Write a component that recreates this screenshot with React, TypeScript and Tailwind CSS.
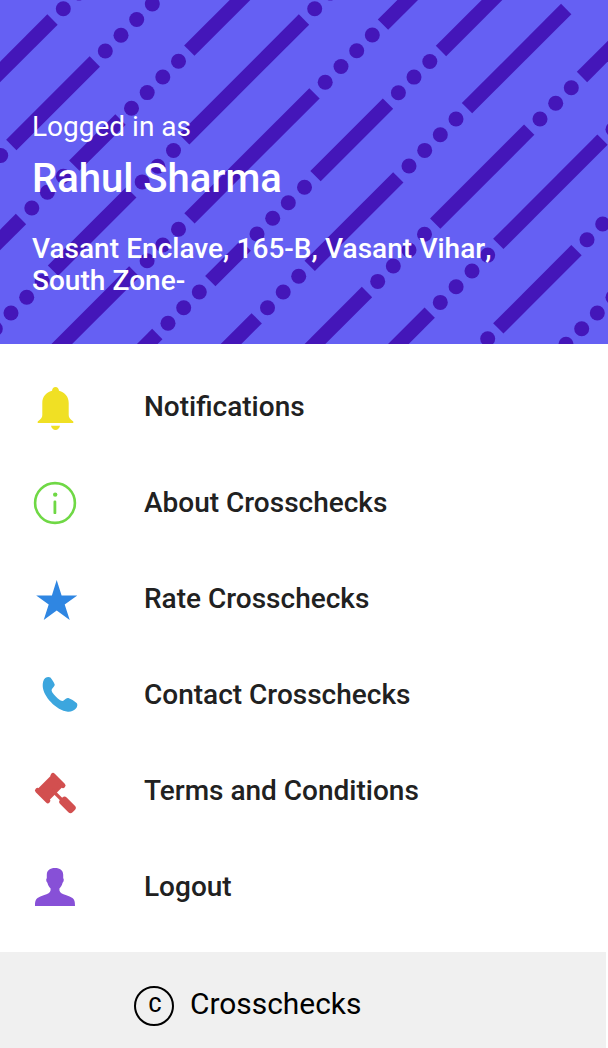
import React from "react";

type Segment = [number, number, number, number];

const bars: Segment[] = [
  [52.5, 19.5, -18, 90],
  [94.8, 61.5, 11.3, 145],
  [260, -20, 189.3, 50.7],
  [120.5, 119.5, 74.3, 165.7],
  [21, 219, -20, 260],
  [304, 19.5, 184.2, 139.3],
  [131.3, 192.3, 53, 270.6],
  [430, -22.3, 383, 24.7],
  [314.5, 93.3, 189.5, 218.3],
  [134.3, 271.5, 45.8, 360],
  [515, -23, 441, 51],
  [388, 103.7, 315.5, 176.2],
  [245.7, 245.7, 210.3, 281.1],
  [157.3, 334, 131.3, 360],
  [566.2, 9, 467, 108.2],
  [398.3, 177.3, 309.7, 265.9],
  [256.7, 318.3, 215, 360],
  [639, 20, 582, 77],
  [529.2, 129.7, 435.2, 223.7],
  [367, 292, 299, 360],
  [602.5, 139.7, 498.3, 243.9],
  [429.7, 312.7, 382.4, 360],
  [576.5, 250.2, 498.3, 328.4],
];

const dots: [number, number][] = [
  [63.3, 8.8], [79, -7],
  [105.3, 51], [121, 35.3], [136.7, 19.5], [152.3, 4], [0.7, 155.5],
  [178.5, 61.3], [162.8, 77], [147.2, 92.6], [131.5, 108.3],
  [63.3, 176.3], [47.4, 192.2], [31.8, 208],
  [314.7, 8.8], [330.3, -7], [173.5, 150.5], [157.8, 166.2], [142.2, 181.9],
  [42.2, 281.5], [26.7, 297.2], [11, 313], [-4.7, 328.7],
  [372.3, 35], [356.7, 50.8], [341, 66.5], [325.2, 82.3],
  [178.5, 229.3], [162.8, 245], [147.1, 260.7],
  [429.8, 61.5], [414, 77.1], [398.4, 92.7],
  [304.5, 187.3], [288.3, 202.7], [272.7, 218.3], [257, 234],
  [199.3, 292], [183.7, 307.7], [168, 323.3],
  [456, 119], [440.3, 134.7], [424.7, 150.4], [409, 166],
  [298.7, 276.3], [283.2, 292], [267.5, 307.7],
  [571.3, 87.7], [555.7, 103.3], [540, 119],
  [424.5, 234.3], [409, 250], [393.3, 266], [377.7, 281.4],
  [613, 129.3], [487.7, 255.1], [472, 271], [456.1, 286.7], [440.3, 302.4],
  [587, 239.7], [602.7, 224], [487.7, 338.7],
  [613, 297.3], [597.3, 313], [581.7, 328.7], [566, 344.3],
];

function Pattern() {
  return (
    <svg className="absolute inset-0 h-full w-full" viewBox="0 0 608 344" aria-hidden="true">
      <g stroke="#4416b9" strokeWidth="14.6">
        {bars.map(([x1, y1, x2, y2]) => (
          <line key={`${x1}-${y1}`} x1={x1} y1={y1} x2={x2} y2={y2} />
        ))}
      </g>
      <g fill="#4416b9">
        {dots.map(([x, y]) => (
          <circle key={`${x}-${y}`} cx={x} cy={y} r="7.5" />
        ))}
      </g>
    </svg>
  );
}

function BellIcon() {
  return (
    <svg className="size-12" viewBox="0 0 48 48" fill="#f0e024">
      <path d="M23.500 3c-1.900 0-3.300 1.400-3.500 3.700C14 8 10.300 13 10.300 19v12c0 2.500-1.200 4-4.600 6.500V39h35.600v-1.500c-3.400-2.500-4.600-4-4.600-6.500V19c0-6-3.700-11-9.700-12.300C26.800 4.400 25.400 3 23.500 3z" />
      <path d="M19 41.800h9c-.6 2.700-2.300 4.200-4.500 4.200S19.600 44.500 19 41.800z" />
    </svg>
  );
}

function InfoIcon() {
  return (
    <svg className="size-12" viewBox="0 0 48 48" fill="#6fd845">
      <circle cx="23" cy="23" r="19.900" fill="none" stroke="#6fd845" strokeWidth="2.600" />
      <circle cx="23.200" cy="14.600" r="2.200" />
      <rect x="21.500" y="20.600" width="2.800" height="13.500" rx="1.200" />
    </svg>
  );
}

function StarIcon() {
  return (
    <svg className="size-12" viewBox="0 0 48 48" fill="#2f86e2">
      <path d="M24.700 4l4.900 15.500H45.300L32.700 28.500l5 15.500-13-9.400-13 9.400 5-15.500L4.200 19.500h15.700z" />
    </svg>
  );
}

function PhoneIcon() {
  return (
    <svg className="size-12" viewBox="0 0 48 48" fill="#3ca6de">
      <path d="M13.200 6c1.600-1 4-1.500 5.200-.4 1.500 1.600 3.300 4.500 4.300 6.900.5 1.500-3 3.800-3.100 5.700-.1 2 4 6.500 7.200 9.100 2.300 1.900 4 2.100 5.200 1 1.300-1.300 2.800-2.600 4.400-2.300 2.700 1 5.700 3 8.200 4.900 1.300 1 .8 4-.7 5.700-1.700 2-5 3.400-8.100 3.100C24.500 38.500 11 24.500 10.700 14c-.1-3 .6-6.500 2.500-8z" />
    </svg>
  );
}

function GavelIcon() {
  return (
    <svg className="size-12" viewBox="0 0 48 48" fill="none" stroke="#d24f4f">
      <path d="M26.500 11.500L10 28" strokeWidth="16" />
      <path d="M21 7.500L31 17.500M5.500 22.500L15.800 32.800" strokeWidth="5" strokeLinecap="round" />
      <path d="M20 22l11 11" strokeWidth="3.200" />
      <rect x="26.700" y="32.300" width="17.600" height="9.200" rx="3" transform="rotate(45 35.500 36.900)" fill="#d24f4f" stroke="none" />
    </svg>
  );
}

function PersonIcon() {
  return (
    <svg className="size-12" viewBox="0 0 48 48" fill="#8750d7">
      <path d="M23 4c5 0 8.200 2.300 8.200 6.800v3.500c1 .5.700 3.600-.6 4.400-.7 3-2 4.600-3.200 5.800-.3 3 .8 4.500 4.100 5.800 3 1.200 5.500 2 8 3.200 2.800 1.400 3.500 3.500 3.500 8.500H3c0-5 .7-7.100 3.500-8.500 2.500-1.200 5-2 8-3.200 3.300-1.300 4.400-2.800 4.100-5.800-1.200-1.200-2.500-2.800-3.200-5.800-1.300-.8-1.600-3.900-.6-4.400v-3.500C14.800 6.300 18 4 23 4z" />
    </svg>
  );
}

const items = [
  { label: "Notifications", Icon: BellIcon },
  { label: "About Crosschecks", Icon: InfoIcon },
  { label: "Rate Crosschecks", Icon: StarIcon },
  { label: "Contact Crosschecks", Icon: PhoneIcon },
  { label: "Terms and Conditions", Icon: GavelIcon },
  { label: "Logout", Icon: PersonIcon },
];

export default function App() {
  return (
    <div className="flex h-[1048px] w-[608px] flex-col overflow-hidden bg-white font-[Roboto,sans-serif]">
      <header className="relative h-[344px] shrink-0 overflow-hidden bg-[#6560f3]">
        <Pattern />
        <div className="relative px-8 pt-[111px] text-white">
          <p className="text-[28px] leading-8">Logged in as</p>
          <h1 className="mt-3 text-[40px] font-medium leading-12">Rahul Sharma</h1>
          <p className="mt-[30px] w-[500px] text-[28px] font-medium leading-8 [word-spacing:0.35px]">
            Vasant Enclave, 165-<span className="[font-kerning:none]">B,</span> Vasant Viha
            <span className="[font-kerning:none]">r,</span> South Zone-
          </p>
        </div>
      </header>
      <nav className="flex flex-1 flex-col pt-4">
        {items.map(({ label, Icon }) => (
          <a key={label} className="flex h-24 items-center pl-8">
            <Icon />
            <span className="mb-0.5 ml-16 text-[28px] font-medium leading-8 text-[#212121]">{label}</span>
          </a>
        ))}
      </nav>
      <footer className="mr-0.5 flex h-24 shrink-0 items-center bg-[#f0f0f0] pl-[134px] text-black">
        <span className="mt-3 flex size-10 items-center justify-center rounded-full border-2 border-black pb-0.5 pl-0.5 text-[20px] font-medium leading-none">
          C
        </span>
        <span className="ml-4 mt-2 text-[29.900px] leading-9">Crosschecks</span>
      </footer>
    </div>
  );
}
